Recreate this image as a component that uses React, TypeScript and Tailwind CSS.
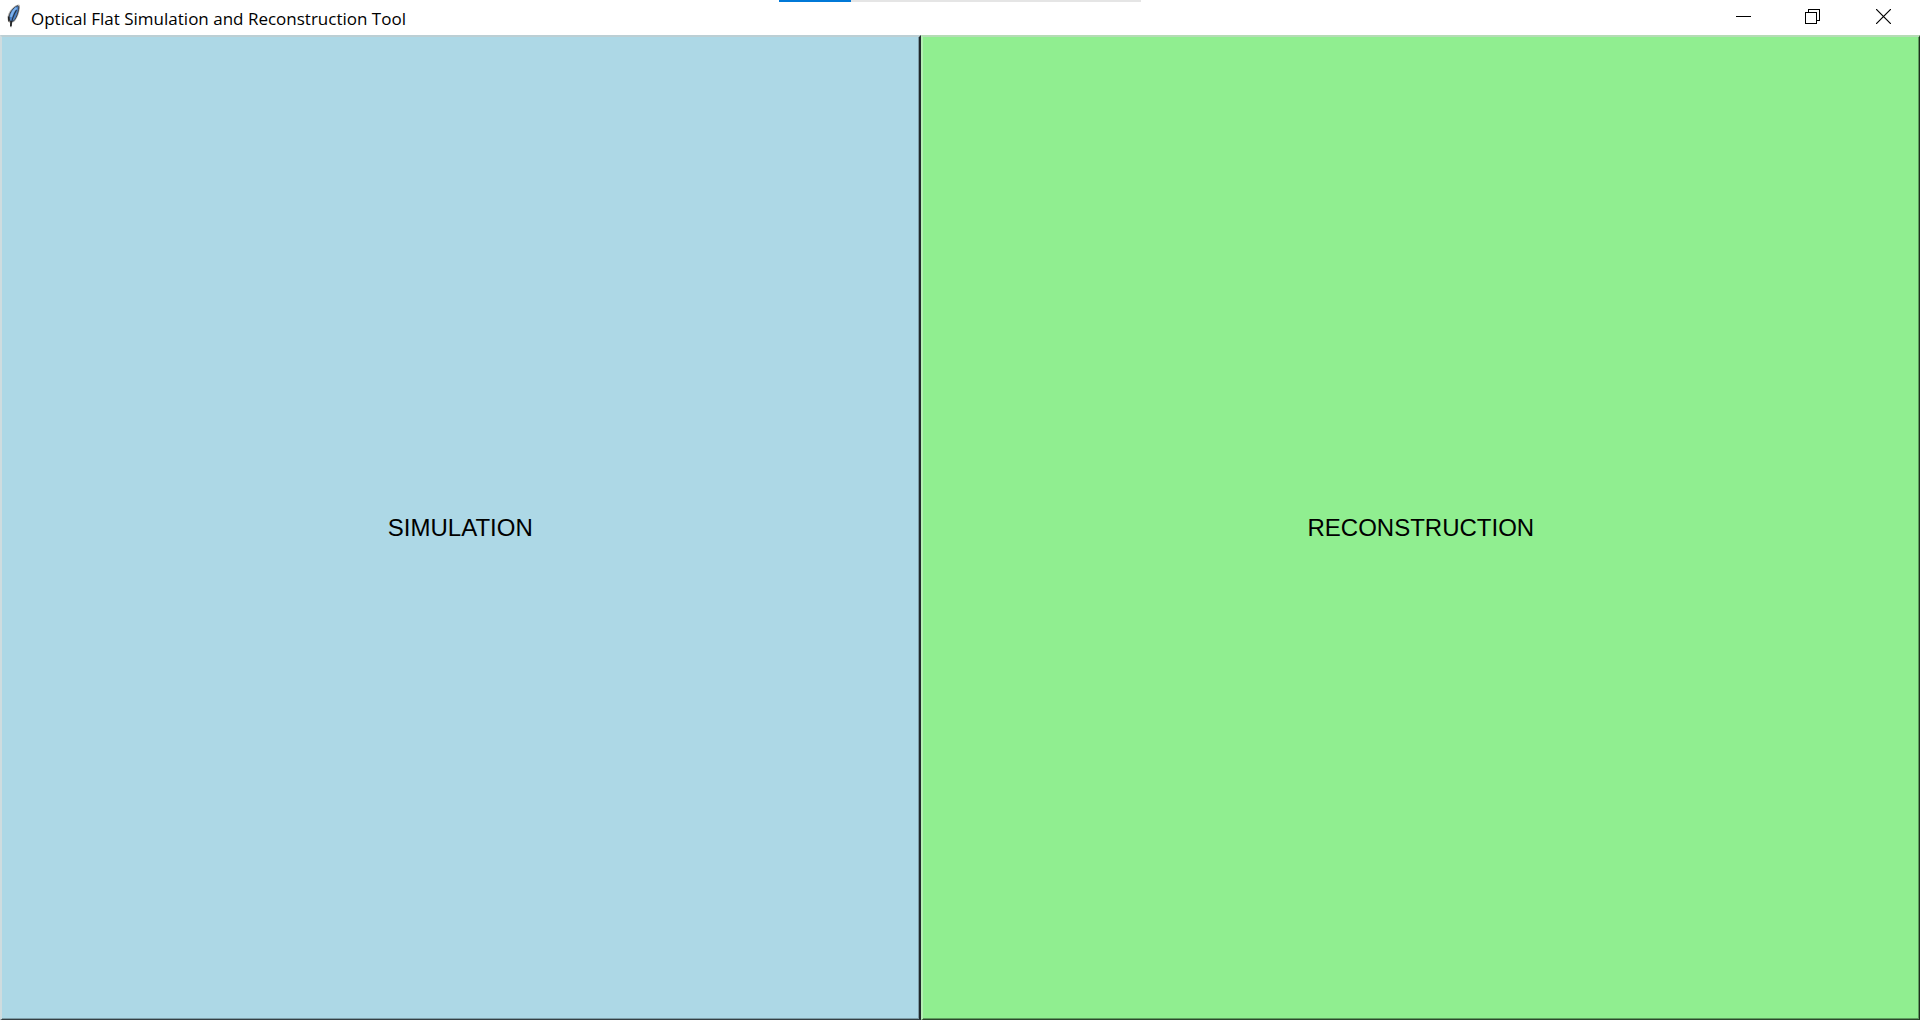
import React from "react";

function FeatherIcon() {
  return (
    <svg width="16" height="25" viewBox="0 0 16 25" aria-hidden="true">
      <path d="M13.5 0.5 C15.5 0.5 15.2 4 14.2 8 C13.2 12 11.5 15.5 9 18 L7.3 18.5 L6.5 23.5 L5 23 L5 19 C2.5 18 2 14 3 11 C4 7 9 1 13.5 0.5 Z" fill="#b8b4b0" />
      <path d="M13 1.8 C14.2 2.3 13.8 4.8 13 8 C12 12 10.5 15 8.5 17 L5.8 17.5 C3.6 15.5 3.8 13 4.6 10.5 C5.8 7 9.5 2.6 13 1.8 Z" fill="#4a80c6" stroke="#3a4450" strokeWidth="1" />
      <path d="M11.5 3.8 C9 5.5 7 9 6 13" fill="none" stroke="#7db2ee" strokeWidth="2" />
      <path d="M11.5 6 C9 10 7 14 5.8 22.5" fill="none" stroke="#26313d" strokeWidth="1.1" />
      <path d="M3.6 12.5 L4 17.5 M6 17 L5.8 22" fill="none" stroke="#222" strokeWidth="1.5" />
    </svg>
  );
}

function TitleBar() {
  return (
    <header className="relative flex h-[35px] shrink-0 items-stretch justify-between bg-white pl-[5px]">
      <div className="flex items-center gap-[10px]">
        <div className="-mt-[2px]">
          <FeatherIcon />
        </div>
        <h1 className="pt-[2px] font-['Open_Sans',sans-serif] text-[17px] leading-6 text-black">
          Optical Flat Simulation and Reconstruction Tool
        </h1>
      </div>
      <div className="absolute left-1/2 top-0 flex h-[2px] w-[362px] -translate-x-1/2 bg-[#e5e5e5]">
        <div className="w-[72px] bg-[#0078d7]" />
      </div>
      <div className="flex">
        <button type="button" aria-label="Minimize" className="flex w-[70px] items-center justify-center pb-[2px]">
          <svg width="15" height="15" viewBox="0 0 15 15" shapeRendering="crispEdges">
            <path d="M0 7.5H15" stroke="#000" />
          </svg>
        </button>
        <button type="button" aria-label="Restore" className="flex w-[68px] items-center justify-center pb-[2px]">
          <svg width="15" height="15" viewBox="0 0 15 15" fill="none" stroke="#000" shapeRendering="crispEdges">
            <path d="M0.5 3.5H11.5V14.5H0.5Z" />
            <path d="M3.5 3V0.5H14.5V11.5H12" />
          </svg>
        </button>
        <button type="button" aria-label="Close" className="flex w-[74px] items-center justify-center pb-[2px]">
          <svg width="15" height="15" viewBox="0 0 15 15">
            <path d="M0 0L15 15M15 0L0 15" stroke="#000" strokeWidth="1.2" />
          </svg>
        </button>
      </div>
    </header>
  );
}

export default function App() {
  return (
    <div className="flex h-screen flex-col overflow-hidden bg-white">
      <TitleBar />
      <main className="flex flex-1">
        <button
          type="button"
          className="flex-auto border-2 border-b border-b-[#343f43] border-l-[#cfdcdf] border-r-[#20282b] border-t-[#bccfd4] bg-[#add8e6] px-2 font-['Liberation_Sans',Arial,sans-serif] text-[24px] leading-7 text-black shadow-[inset_-1px_-1px_0_#7d9ca6]"
        >
          SIMULATION
        </button>
        <button
          type="button"
          className="flex-auto border-2 border-b border-r border-b-[#2b472b] border-l-[#b5eeb5] border-r-[#1d301d] border-t-[#b5dcb5] bg-[#90ee90] px-[7px] font-['Liberation_Sans',Arial,sans-serif] text-[24px] leading-7 text-black shadow-[inset_-1px_-1px_0_#5e9b5e]"
        >
          RECONSTRUCTION
        </button>
      </main>
    </div>
  );
}
